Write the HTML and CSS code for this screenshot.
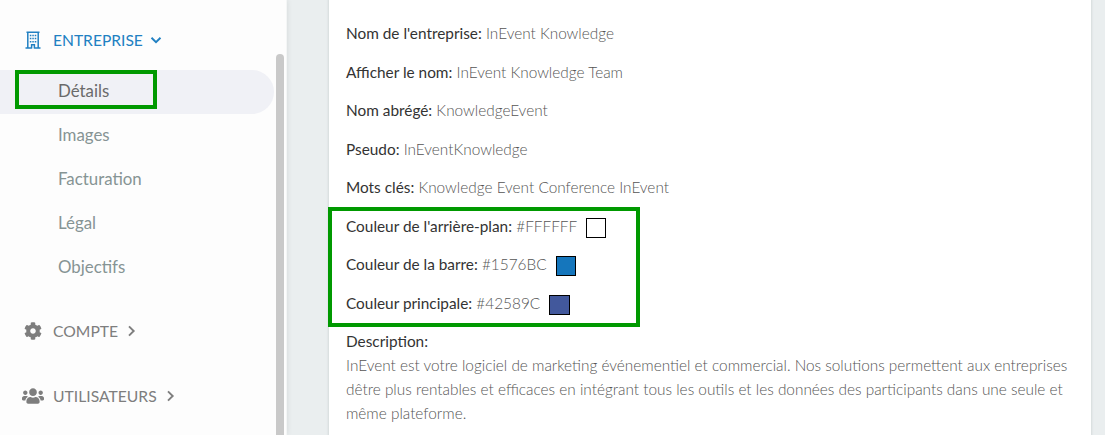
FILE: index.html
```html
<!DOCTYPE html>
<html lang="fr">
<head>
<meta charset="utf-8">
<title>Détails</title>
<link rel="stylesheet" href="styles.css">
</head>
<body>
<div class="app">
  <nav class="sidebar">
    <div class="section section-open">
      <svg class="icon" viewBox="0 0 22 18"><path d="M4.500 1.200h13M5.800 1v15.500M16.200 1v15.500M3.500 17.100h6.400M12.100 17.100h6.400M9.600 17.500v-3.800h2.800v3.800" fill="none" stroke="currentColor" stroke-width="1.500"/><path d="M7.800 3.700h1.600v1.500H7.800zM10.300 3.700h1.500v1.500h-1.500zM12.700 3.700h1.600v1.500h-1.600zM7.800 6.800h1.600v1.500H7.800zM10.300 6.800h1.500v1.500h-1.500zM12.700 6.800h1.600v1.500h-1.600zM7.800 9.900h1.600v1.500H7.800zM10.300 9.900h1.500v1.500h-1.500zM12.700 9.900h1.600v1.500h-1.600z" fill="currentColor"/></svg>
      <span class="name name-entreprise">ENTREPRISE</span>
      <svg class="chevron" viewBox="0 0 12 12"><path d="M1.500 3.800 6 8.200l4.500-4.400" fill="none" stroke="currentColor" stroke-width="1.900"/></svg>
    </div>
    <ul class="submenu">
      <li class="item active">Détails</li>
      <li class="item">Images</li>
      <li class="item">Facturation</li>
      <li class="item">Légal</li>
      <li class="item">Objectifs</li>
    </ul>
    <div class="section">
      <svg class="icon" viewBox="0 0 512 512"><path fill="currentColor" d="M487.400 315.700l-42.600-24.600c4.300-23.200 4.300-47 0-70.200l42.600-24.600c4.900-2.800 7.100-8.600 5.500-14-11.100-35.600-30-67.800-54.700-94.600-3.800-4.100-10-5.100-14.800-2.300L380.800 110c-17.900-15.400-38.500-27.300-60.800-35.100V25.800c0-5.600-3.900-10.500-9.400-11.700-36.700-8.200-74.300-7.800-109.200 0-5.500 1.200-9.400 6.100-9.400 11.700V75c-22.200 7.900-42.800 19.800-60.800 35.100L88.700 85.500c-4.900-2.800-11-1.900-14.800 2.300-24.700 26.700-43.600 58.900-54.700 94.600-1.700 5.400.6 11.200 5.500 14L67.300 221c-4.300 23.200-4.300 47 0 70.200l-42.600 24.600c-4.900 2.800-7.100 8.600-5.500 14 11.100 35.600 30 67.800 54.700 94.600 3.800 4.100 10 5.100 14.800 2.300l42.600-24.600c17.900 15.400 38.500 27.300 60.800 35.100v49.200c0 5.600 3.900 10.500 9.400 11.700 36.700 8.200 74.300 7.800 109.200 0 5.500-1.200 9.400-6.100 9.400-11.700v-49.200c22.200-7.900 42.800-19.800 60.800-35.100l42.600 24.600c4.900 2.800 11 1.900 14.800-2.300 24.700-26.700 43.600-58.900 54.700-94.600 1.500-5.500-.7-11.300-5.600-14.100zM256 336c-44.100 0-80-35.900-80-80s35.900-80 80-80 80 35.900 80 80-35.900 80-80 80z"/></svg>
      <span class="name">COMPTE</span>
      <svg class="chevron" viewBox="0 0 12 12"><path d="M4 1.300 8.700 6 4 10.700" fill="none" stroke="currentColor" stroke-width="1.900"/></svg>
    </div>
    <div class="section">
      <svg class="icon" viewBox="0 0 640 512"><path fill="currentColor" d="M96 224c35.300 0 64-28.700 64-64s-28.700-64-64-64-64 28.700-64 64 28.700 64 64 64zm448 0c35.300 0 64-28.700 64-64s-28.700-64-64-64-64 28.700-64 64 28.700 64 64 64zm32 32h-64c-17.600 0-33.500 7.100-45.100 18.600 40.300 22.100 68.900 62 75.100 109.400h66c17.700 0 32-14.300 32-32v-32c0-35.300-28.700-64-64-64zm-256 0c61.900 0 112-50.100 112-112S381.900 32 320 32 208 82.100 208 144s50.100 112 112 112zm76.800 32h-8.300c-20.800 10-43.900 16-68.500 16s-47.600-6-68.500-16h-8.300C179.600 288 128 339.600 128 403.200V432c0 26.500 21.500 48 48 48h288c26.500 0 48-21.500 48-48v-28.800c0-63.600-51.600-115.200-115.200-115.200zm-223.700-13.400C161.500 263.100 145.600 256 128 256H64c-35.300 0-64 28.700-64 64v32c0 17.700 14.300 32 32 32h65.900c6.300-47.400 34.900-87.300 75.200-109.400z"/></svg>
      <span class="name">UTILISATEURS</span>
      <svg class="chevron" viewBox="0 0 12 12"><path d="M4 1.300 8.700 6 4 10.700" fill="none" stroke="currentColor" stroke-width="1.900"/></svg>
    </div>
    <div class="scrollbar"></div>
    <div class="highlight highlight-item"></div>
  </nav>
  <main class="content">
    <article class="card">
      <p class="row"><b>Nom de l'entreprise:</b><span> InEvent Knowledge</span></p>
      <p class="row"><b>Afficher le nom:</b><span> InEvent Knowledge Team</span></p>
      <p class="row"><b>Nom abrégé:</b><span> KnowledgeEvent</span></p>
      <p class="row"><b>Pseudo:</b><span> InEventKnowledge</span></p>
      <p class="row"><b>Mots clés:</b><span> Knowledge Event Conference InEvent</span></p>
      <p class="row"><b>Couleur de l'arrière-plan:</b><span> #FFFFFF</span><i class="swatch white"></i></p>
      <p class="row"><b>Couleur de la barre:</b><span> #1576BC</span><i class="swatch bar"></i></p>
      <p class="row"><b>Couleur principale:</b><span> #42589C</span><i class="swatch main"></i></p>
      <div class="description"><b>Description:</b>
        <p>InEvent est votre logiciel de marketing événementiel et commercial. Nos solutions permettent aux entreprises<br>dêtre plus rentables et efficaces en intégrant tous les outils et les données des participants dans une seule et<br>même plateforme.</p>
      </div>
      <div class="highlight highlight-colors"></div>
    </article>
  </main>
</div>
</body>
</html>
```
FILE: styles.css
```css
* { box-sizing: border-box; }
body { margin: 0; font-family: Lato, "Liberation Sans", sans-serif; background: #eaeeef; }
.app { display: flex; width: 1105px; height: 435px; overflow: hidden; }
.sidebar { position: relative; flex: 0 0 287px; padding-top: 15px; background: #fdfdfd; border-right: 1px solid #f4f6f6; box-shadow: 0 0 6px rgba(0, 0, 0, .09); color: #7e7e7e; z-index: 1; }
.section { display: flex; align-items: center; height: 50px; margin-bottom: 15px; padding-left: 22px; font-size: 15.700px; }
.section-open { color: #2180c2; margin-bottom: 5px; }
.section-open .icon { margin-bottom: 1px; }
.name-entreprise { font-size: 15.600px; }
.icon { width: 22px; height: 18px; margin-right: 9px; }
.chevron { width: 12px; height: 12px; margin-left: 7px; }
.submenu { margin: 0 0 16px; padding: 0; list-style: none; }
.item { width: 274px; height: 44px; padding-left: 58px; font-size: 16.850px; line-height: 42px; color: #869494; }
.active { background: #f0f1f6; border-radius: 0 22px 22px 0; color: #6a6a6a; }
.scrollbar { position: absolute; left: 276px; top: 54px; width: 8px; height: 400px; border-radius: 4px; background: #c9c9c9; }
.highlight { position: absolute; border: 4px solid #009900; }
.highlight-item { left: 15px; top: 70px; width: 142px; height: 39px; }
.content { flex: 1; padding: 0 14px 0 42px; background: #eaeeef; }
.card { position: relative; height: 435px; padding: 14px 0 0 17px; background: #fff; box-shadow: 0 0 2px 1px #d5dadb; font-size: 15.360px; font-weight: 300; color: #555; }
.card b { font-weight: 400; color: #333; }
.row { display: flex; align-items: center; height: 38.500px; margin: 0; white-space: pre; }
.swatch { width: 20px; height: 20px; margin: 4px 0 0 9px; border: 1px solid #000; }
.white { background: #fff; }
.bar { background: #1576bc; }
.main { width: 21px; background: #42589c; }
.description { padding-top: 7px; line-height: 24px; white-space: nowrap; }
.description p { margin: 0; }
.highlight-colors { left: -1px; top: 207px; width: 312px; height: 120px; }
```
